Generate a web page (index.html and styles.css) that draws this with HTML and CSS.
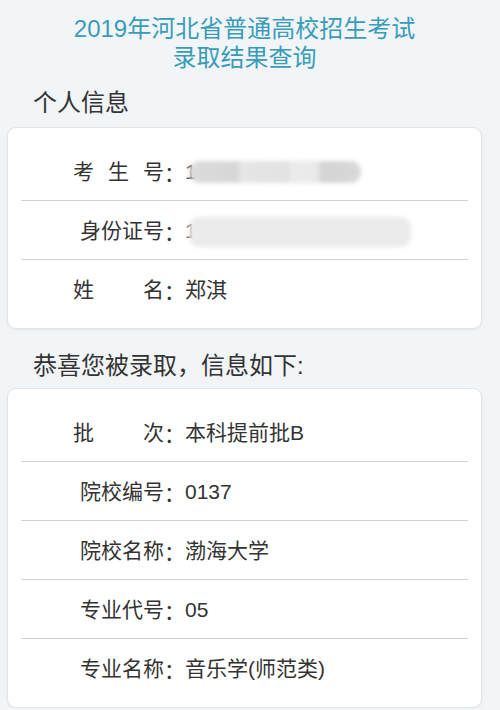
FILE: index.html
```html
<!DOCTYPE html>
<html lang="zh-CN">
<head>
<meta charset="utf-8">
<title>录取结果查询</title>
<link rel="stylesheet" href="styles.css">
</head>
<body>
<div class="page">
  <h1 class="title">2019年河北省普通高校招生考试<br>录取结果查询</h1>

  <h2 class="heading heading-first">个人信息</h2>
  <div class="card">
    <div class="row">
      <span class="lab spread"><span>考</span><span>生</span><span>号</span></span><span class="colon">：</span>
      <span class="val masked">19<span class="smear smear-a"></span></span>
    </div>
    <div class="row">
      <span class="lab">身份证号</span><span class="colon">：</span>
      <span class="val masked">1<span class="smear smear-b"></span></span>
    </div>
    <div class="row">
      <span class="lab spread"><span>姓</span><span>名</span></span><span class="colon">：</span>
      <span class="val">郑淇</span>
    </div>
  </div>

  <h2 class="heading heading-second">恭喜您被录取，信息如下:</h2>
  <div class="card">
    <div class="row">
      <span class="lab spread"><span>批</span><span>次</span></span><span class="colon">：</span>
      <span class="val">本科提前批B</span>
    </div>
    <div class="row">
      <span class="lab">院校编号</span><span class="colon">：</span>
      <span class="val">0137</span>
    </div>
    <div class="row">
      <span class="lab">院校名称</span><span class="colon">：</span>
      <span class="val">渤海大学</span>
    </div>
    <div class="row">
      <span class="lab">专业代号</span><span class="colon">：</span>
      <span class="val">05</span>
    </div>
    <div class="row">
      <span class="lab">专业名称</span><span class="colon">：</span>
      <span class="val">音乐学(师范类)</span>
    </div>
  </div>
</div>
</body>
</html>
```

FILE: styles.css
```css
html, body {
  margin: 0;
  padding: 0;
  background: #f2f5f8;
}
body {
  font-family: "Liberation Sans", "Noto Sans CJK SC", sans-serif;
  color: #333333;
}
.page {
  width: 489px;
  padding: 14px 0 0;
}
.title {
  margin: 0;
  text-align: center;
  font-size: 24px;
  line-height: 29px;
  font-weight: 400;
  color: #3a9cb9;
}
.heading {
  margin: 0 0 0 33px;
  font-size: 24px;
  line-height: 32px;
  font-weight: 400;
  color: #333333;
}
.heading-first {
  margin-top: 15px;
  margin-bottom: 8px;
}
.heading-second {
  margin-top: 21px;
  margin-bottom: 6px;
}
.card {
  margin: 0 7px;
  background: #ffffff;
  border: 1px solid #e2e4e6;
  border-radius: 9px;
  box-shadow: 0 1px 3px rgba(0, 0, 0, 0.06);
  padding: 14px 0 10px;
}
.row {
  margin: 0 13px;
  padding: 15px 0 13px 52px;
  display: flex;
  align-items: center;
  font-size: 21px;
  line-height: 30px;
  border-bottom: 1px solid #d2d2d2;
}
.row:last-child {
  border-bottom: none;
}
.lab {
  width: 91px;
  display: flex;
  justify-content: flex-end;
  white-space: nowrap;
}
.lab.spread {
  justify-content: space-between;
}
.colon {
  width: 21px;
  flex: none;
  font-family: "Noto Sans CJK SC", sans-serif;
  line-height: 30px;
}
.val {
  white-space: nowrap;
}
.masked {
  position: relative;
  color: #555;
}
.smear {
  position: absolute;
  top: 4px;
  left: 4px;
  height: 22px;
  border-radius: 11px;
  filter: blur(2px);
}
.smear-a {
  width: 172px;
  background: linear-gradient(90deg, #dcdcdc 0%, #d6d6d6 28%, #e6e6e6 30%, #e2e2e2 58%, #ececec 60%, #e8e8e8 75%, #d4d4d4 77%, #d8d8d8 100%);
}
.smear-b {
  top: 1px;
  width: 222px;
  height: 30px;
  background: #ebebeb;
}
```
